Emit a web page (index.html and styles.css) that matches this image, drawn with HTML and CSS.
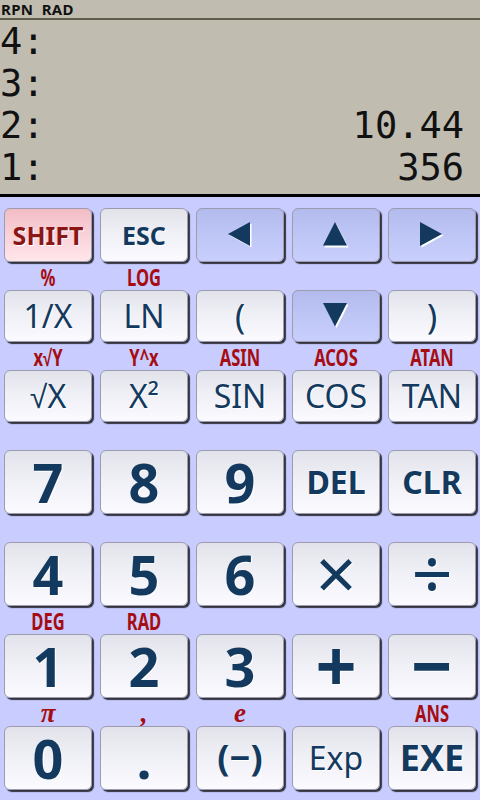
FILE: index.html
```html
<!DOCTYPE html>
<html lang="en">

<head>
    <meta charset="UTF-8">
    <meta name="viewport" content="width=device-width, initial-scale=1.0">
    <title>RPN Calculator</title>
    <link rel="stylesheet" href="styles.css">
</head>

<body>
    <div class="display">
        <div class="status">RPN&nbsp;&nbsp;RAD</div>
        <div class="stack">
            <div class="level"><span>4:</span><span></span></div>
            <div class="level"><span>3:</span><span></span></div>
            <div class="level"><span>2:</span><span>10.44</span></div>
            <div class="level"><span>1:</span><span>356</span></div>
        </div>
    </div>

    <div class="keypad">
        <!-- fila 1 -->
        <div class="row row-top">
            <button class="key shift">SHIFT</button>
            <button class="key small-bold">ESC</button>
            <button class="key blue">
                <svg width="26" height="26" viewBox="0 0 26 26">
                    <polygon points="2.5,13.5 24.5,1.5 24.5,25.5" fill="#fff" />
                    <polygon points="1,12 23,0 23,24" fill="#133a5e" />
                </svg>
            </button>
            <button class="key blue">
                <svg width="26" height="26" viewBox="0 0 26 26">
                    <polygon points="13.5,2 25.5,25.5 1.5,25.5" fill="#fff" />
                    <polygon points="12,0 24,23.5 0,23.5" fill="#133a5e" />
                </svg>
            </button>
            <button class="key blue">
                <svg width="26" height="26" viewBox="0 0 26 26">
                    <polygon points="2.5,1.5 24.5,13.5 2.5,25.5" fill="#fff" />
                    <polygon points="1,0 23,12 1,24" fill="#133a5e" />
                </svg>
            </button>
        </div>

        <div class="labels">
            <span>%</span><span>LOG</span><span></span><span></span><span></span>
        </div>
        <div class="row row-fn">
            <button class="key">1/X</button>
            <button class="key">LN</button>
            <button class="key paren">(</button>
            <button class="key blue">
                <svg width="26" height="26" viewBox="0 0 26 26">
                    <polygon points="1.5,1.5 25.5,1.5 13.5,25" fill="#fff" />
                    <polygon points="0,0 24,0 12,23.5" fill="#133a5e" />
                </svg>
            </button>
            <button class="key paren">)</button>
        </div>

        <div class="labels">
            <span>x√Y</span><span>Y^x</span><span>ASIN</span><span>ACOS</span><span>ATAN</span>
        </div>
        <div class="row row-fn">
            <button class="key">√X</button>
            <button class="key">X²</button>
            <button class="key">SIN</button>
            <button class="key">COS</button>
            <button class="key">TAN</button>
        </div>

        <div class="labels">
            <span></span><span></span><span></span><span></span><span></span>
        </div>
        <div class="row row-num">
            <button class="key digit">7</button>
            <button class="key digit">8</button>
            <button class="key digit">9</button>
            <button class="key word">DEL</button>
            <button class="key word">CLR</button>
        </div>

        <div class="labels">
            <span></span><span></span><span></span><span></span><span></span>
        </div>
        <div class="row row-num">
            <button class="key digit">4</button>
            <button class="key digit">5</button>
            <button class="key digit">6</button>
            <button class="key op thin">×</button>
            <button class="key op thin">÷</button>
        </div>

        <div class="labels">
            <span>DEG</span><span>RAD</span><span></span><span></span><span></span>
        </div>
        <div class="row row-num">
            <button class="key digit">1</button>
            <button class="key digit">2</button>
            <button class="key digit">3</button>
            <button class="key op">+</button>
            <button class="key op">−</button>
        </div>

        <div class="labels">
            <span class="greek">π</span><span class="greek">,</span><span class="greek">e</span><span></span><span>ANS</span>
        </div>
        <div class="row row-num">
            <button class="key digit">0</button>
            <button class="key digit">.</button>
            <button class="key neg">(−)</button>
            <button class="key">Exp</button>
            <button class="key exe">EXE</button>
        </div>
    </div>
</body>

</html>
```

FILE: styles.css
```css
body {
    margin: 0;
    padding: 0;
    width: 480px;
    height: 800px;
    overflow: hidden;
    font-family: "Noto Sans", sans-serif;
    background-color: #c8ccfe;
}

.display {
    background-color: #c0bcb0;
    border-bottom: 3px solid #000;
    height: 194px;
}

.status {
    height: 18px;
    line-height: 19px;
    border-bottom: 2px solid #5c5c4a;
    font-size: 15px;
    font-weight: bold;
    color: #111;
    padding-left: 1px;
    letter-spacing: 0.3px;
}

.stack {
    padding: 1px 16px 0 0;
    font-family: "DejaVu Sans Mono", monospace;
    font-size: 37px;
    color: #111;
}

.level {
    display: flex;
    justify-content: space-between;
    height: 42px;
    line-height: 42px;
}

.keypad {
    display: flex;
    flex-direction: column;
    padding: 11px 4px 0;
}

.row,
.labels {
    display: grid;
    grid-template-columns: repeat(5, 1fr);
    column-gap: 8px;
}

.row-top .key {
    height: 54px;
}

.row-fn .key {
    height: 52px;
}

.row-num .key {
    height: 64px;
}

.labels {
    height: 28px;
    align-items: center;
    text-align: center;
    color: #a50d12;
    font-size: 23px;
    font-weight: bold;
}

.labels span {
    display: inline-block;
    transform: scaleX(0.72);
    line-height: 26px;
    padding-top: 2px;
}

.labels .greek {
    font-family: "Liberation Serif", serif;
    font-style: italic;
    font-weight: bold;
    font-size: 27px;
    transform: none;
}

.key {
    display: flex;
    align-items: center;
    justify-content: center;
    padding: 0;
    margin: 0;
    border: 1px solid #9c9cae;
    border-radius: 6px;
    background: linear-gradient(#e2e2ea 0%, #efeff6 45%, #fafaff 100%);
    box-shadow: 2px 2px 1px #34343f;
    font-family: "Noto Sans", sans-serif;
    font-size: 32px;
    line-height: 1;
    color: #133a5e;
    text-shadow: 1px 1px 0 #fff;
    cursor: pointer;
}

.key.blue {
    background: linear-gradient(#b3bbee 0%, #bec6f6 50%, #c8cffd 100%);
}

.key.shift {
    background: linear-gradient(#f3bcc5 0%, #f9d2d9 50%, #ffe6eb 100%);
    color: #8a1616;
    font-size: 25px;
    font-weight: bold;
}

.key.small-bold {
    font-size: 25px;
    font-weight: bold;
}

.key.paren {
    font-size: 34px;
}

.key.digit {
    font-size: 54px;
    font-weight: bold;
}

.key.word {
    font-size: 32px;
    font-weight: bold;
}

.key.op {
    font-size: 72px;
    line-height: 56px;
    font-weight: bold;
    padding-bottom: 4px;
}

.key.op.thin {
    font-weight: normal;
}

.key.neg {
    font-size: 36px;
    font-weight: bold;
}

.key.exe {
    font-size: 36px;
    font-weight: bold;
}
```
